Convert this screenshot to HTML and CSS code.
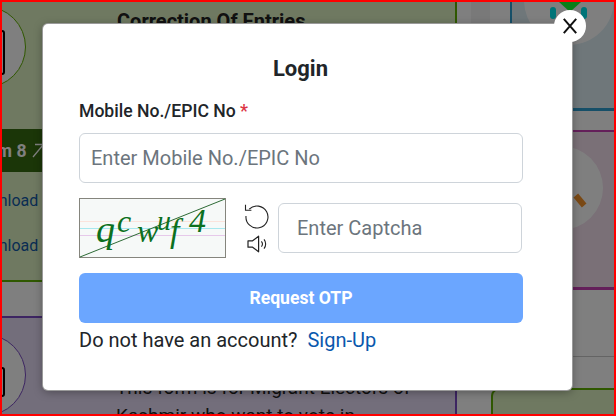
FILE: index.html
```html
<!DOCTYPE html>
<html lang="en">
<head>
<meta charset="utf-8">
<title>Login</title>
<link rel="stylesheet" href="styles.css">
</head>
<body>
<div class="page">
  <div class="backdrop-layout">
    <div class="col-left">
      <section class="card card-green">
        <div class="avatar avatar-green"><span class="device device-green"></span></div>
        <h3 class="card-title">Correction Of Entries</h3>
        <div class="form-tag">Form 8 <svg class="tag-arrow" width="12" height="15" viewBox="0 0 12 15"><path d="M1 14 11 2M3 1.5H11.2V11" fill="none" stroke="#fff" stroke-width="1.3"/></svg></div>
        <a class="dl dl-one">Download</a>
        <a class="dl dl-two">Download</a>
      </section>
      <section class="card card-purple">
        <div class="avatar avatar-purple"><span class="device device-purple"></span></div>
        <p class="card-body">This form is for Migrant Electors of<br>Kashmir who want to vote in</p>
      </section>
    </div>
    <div class="col-right">
      <section class="side side-blue">
        <div class="side-circle side-circle-top">
          <span class="mark mark-l"></span><span class="mark mark-r"></span><span class="mark-tri"></span>
        </div>
      </section>
      <section class="side side-pink">
        <div class="side-circle side-circle-pink"><span class="stick"></span></div>
      </section>
      <div class="rule"></div>
      <section class="side-green"></section>
    </div>
  </div>
  <div class="scrim"></div>
  <div class="modal">
    <button class="close" aria-label="Close">
      <svg width="14" height="16" viewBox="0 0 14 16"><path d="M0.8 0.8 13.2 15.2M13.2 0.8 0.8 15.2" stroke="#111" stroke-width="2" fill="none"/></svg>
    </button>
    <h2 class="title">Login</h2>
    <label class="label">Mobile No./EPIC No <span class="req">*</span></label>
    <input class="field field-main" placeholder="Enter Mobile No./EPIC No">
    <div class="captcha-row">
      <svg class="captcha" width="147" height="60" viewBox="0 0 147 60">
        <rect x="0.5" y="0.5" width="146" height="59" fill="#f6f9f8" stroke="#85857d"/>
        <path d="M1 23.5H146" stroke="#fbe3dc"/>
        <path d="M1 30.5H146" stroke="#a8e8ee"/>
        <path d="M1 37.5H146" stroke="#e6c9ea"/>
        <path d="M1 59 146 1" stroke="#2d6a35" stroke-width="1"/>
        <g class="captcha-text">
          <text x="17" y="44" font-size="38">q</text>
          <text x="38" y="34" font-size="32">c</text>
          <text x="58" y="44" font-size="32">w</text>
          <text x="78" y="32" font-size="28">u</text>
          <text x="91" y="44" font-size="34">f</text>
          <text x="110" y="34" font-size="34">4</text>
        </g>
      </svg>
      <div class="captcha-tools">
        <svg width="26" height="26" viewBox="0 0 26 26"><path d="M5.2 6.2A11 11 0 1 1 2 13" fill="none" stroke="#222" stroke-width="1.1"/><path d="M1.5 1.8V7.2H7.4" fill="none" stroke="#222" stroke-width="1.1"/></svg>
        <svg width="22" height="18" viewBox="0 0 22 18"><path d="M2 5.8H6.6L12.6 1.2V16.8L6.6 12.2H2Z" fill="none" stroke="#222" stroke-width="1.2" stroke-linejoin="round"/><path d="M15.4 6.3C16.6 7.8 16.6 10.2 15.4 11.7M18 4.4C20.2 7 20.2 11 18 13.6" fill="none" stroke="#222" stroke-width="1.1"/></svg>
      </div>
      <input class="field field-captcha" placeholder="Enter Captcha">
    </div>
    <button class="submit">Request OTP</button>
    <p class="signup">Do not have an account? <a class="signup-link">Sign-Up</a></p>
  </div>
</div>
</body>
</html>
```
FILE: styles.css
```css
* { box-sizing: border-box; }
html, body { margin: 0; height: 100%; }
body { font-family: Roboto, "Liberation Sans", sans-serif; overflow: hidden; }
.page {
  position: relative;
  width: 616px;
  height: 416px;
  border: 2px solid #ff0000;
  overflow: hidden;
  background: #fff;
}
.backdrop-layout { display: flex; height: 100%; }
.col-left { width: 455px; flex: none; display: flex; flex-direction: column; }
.col-right {
  flex: 1; display: flex; flex-direction: column; min-width: 0;
  background: linear-gradient(90deg, #fff 0 14px, #f2f2f2 14px 33px, #fff 33px) no-repeat 0 0 / 100% 111px;
}

.card { position: relative; overflow: hidden; border-right: 2px solid; }
.card-green { height: 280px; background: #dff2c2; border-color: #5fb000; border-bottom: 2px solid #5fb000; }
.card-purple { margin-top: 34px; flex: 1; background: #e6dcf6; border-color: #7a4bc4; border-top: 2px solid #7a4bc4; }

.avatar { position: absolute; left: -58px; width: 82px; height: 82px; border-radius: 50%; background: #fff; border: 1px solid; }
.avatar-green { top: 4px; border-color: #5fb000; }
.avatar-purple { top: 16px; border-color: #7a4bc4; }
.device { position: absolute; right: 20px; width: 20px; border: 2px solid #000; border-radius: 3px; }
.device-green { top: 23px; height: 45px; }
.device-purple { top: 32px; height: 30px; }

.card-title { margin: 7px 0 0 115px; font-size: 20px; line-height: 24px; font-weight: 700; color: #222; white-space: nowrap; }
.form-tag {
  position: absolute; left: -31px; top: 127px; width: 120px; height: 43px;
  background: #366c10; color: #fff; font-size: 17.6px; font-weight: 700;
  display: flex; align-items: center; gap: 5px; white-space: nowrap;
}
.tag-arrow { display: block; flex: none; }
.dl { position: absolute; left: -35px; font-size: 16px; line-height: 20px; color: #125aa6; }
.dl-one { top: 189px; }
.dl-two { top: 234px; }
.card-body { margin: 56px 0 0 114px; font-size: 19px; line-height: 28px; color: #222; white-space: nowrap; }

.side { position: relative; overflow: hidden; margin-left: 53px; }
.side-blue { height: 109px; background: #deeff5; border-left: 2px solid #2d9fd0; border-bottom: 3px solid #2d9fd0; }
.side-pink { margin-top: 19px; height: 160px; background: #f4e0ef; border-top: 2px solid #c93fb5; border-bottom: 3px solid #c93fb5; border-left: 2px solid #c93fb5; }
.side-circle { position: absolute; border-radius: 50%; background: #fff; }
.side-circle-top { left: 12px; top: -47px; width: 90px; height: 90px; }
.side-circle-pink { left: 7px; top: 14px; width: 84px; height: 84px; }
.mark { position: absolute; top: 52px; width: 6px; height: 12px; border-radius: 3px; background: #00e8f0; }
.mark-l { left: 26px; }
.mark-r { left: 57px; }
.mark-tri { position: absolute; left: 35px; top: 47px; border-left: 11px solid transparent; border-right: 11px solid transparent; border-top: 10px solid #17ff30; }
.stick { position: absolute; left: 58px; top: 48px; width: 6px; height: 13px; background: #f5932a; transform: rotate(-40deg); }
.rule { margin-top: 66px; height: 1px; background: #c8c8c8; }
.side-green { margin: 31px 0 0 34px; flex: 1; background: #dff2c2; border: 2px solid #5fb000; border-bottom: 0; border-right: 0; border-radius: 8px 0 0 0; }

.scrim { position: absolute; inset: 0; background: rgba(0, 0, 0, 0.5); }

.modal {
  position: absolute; left: 41px; top: 22px; width: 529px; height: 366px;
  background: #fff; border-radius: 5px; padding: 30px 36px 0;
  box-shadow: 0 0 0 1px #9a9a9a, 0 2px 10px rgba(0, 0, 0, 0.35);
}
.close {
  position: absolute; right: -14px; top: -14px; width: 32px; height: 32px; padding: 0;
  border: 0; border-radius: 50%; background: #fff;
  display: flex; align-items: center; justify-content: center;
}
.title { margin: 0; padding-right: 14px; text-align: center; font-size: 22px; line-height: 30px; font-weight: 700; color: #212529; }
.label { display: block; margin-top: 15px; font-size: 17.6px; line-height: 24px; font-weight: 500; color: #212529; }
.req { color: #dc3545; font-size: 18px; }
.field {
  display: block; height: 50px; border: 1px solid #ced4da; border-radius: 6px;
  font-family: inherit; font-size: 20px; color: #212529; background: #fff; outline: 0;
}
.field::placeholder { color: #6c757d; opacity: 1; }
.field-main { width: 444px; margin-top: 10px; padding: 0 11px; }
.captcha-row { display: flex; align-items: center; margin-top: 15px; }
.captcha { flex: none; display: block; }
.captcha-text { font-family: "Liberation Serif", serif; font-style: italic; fill: #0c701e; }
.captcha-tools { width: 52px; flex: none; display: flex; flex-direction: column; align-items: center; gap: 6px; padding-left: 10px; }
.captcha-tools svg { display: block; }
.field-captcha { width: 244px; padding: 0 18px; }
.submit {
  display: block; width: 444px; height: 50px; margin-top: 15px; border: 0; border-radius: 6px;
  background: #6ba6ff; color: #fff; font-family: inherit; font-size: 17.6px; font-weight: 700;
}
.signup { margin: 5px 0 0; font-size: 20px; line-height: 24px; color: #212529; }
.signup-link { color: #0a58ad; margin-left: 5px; }
```
